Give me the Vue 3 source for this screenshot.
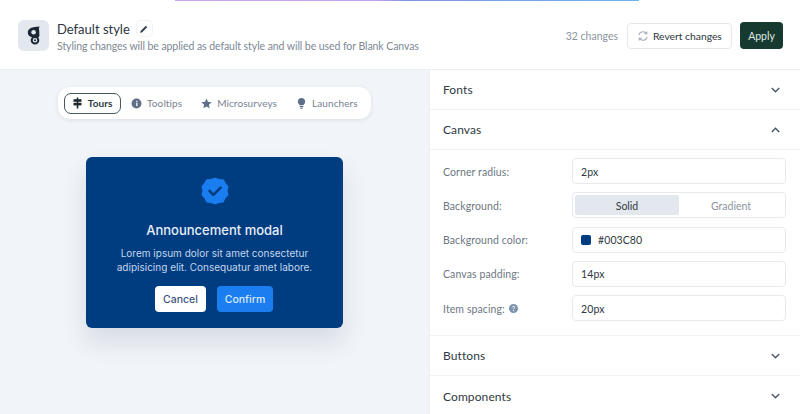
<template>
  <div class="page">
    <div class="top-line"></div>

    <header class="header">
      <div class="logo">
        <svg width="14" height="19" viewBox="0 0 14 19">
          <path d="M.8 6.4 C.8 2.8 5 .8 12.6 .6 C12 2 11.6 2.8 12.2 4.4 L12.4 9 C12.6 11.6 10.6 12 9.6 11.4 C7 12 3.6 11.4 2 9.8 C1.2 8.8 .8 7.6 .8 6.4Z" fill="#1c2733" />
          <circle cx="6.6" cy="6.2" r="2.3" fill="#e3e8ef" />
          <circle cx="8" cy="14.2" r="3.3" fill="#e3e8ef" stroke="#1c2733" stroke-width="2" />
          <circle cx="8" cy="14.2" r="1" fill="#1c2733" />
        </svg>
      </div>
      <div class="heading">
        <div class="title-row">
          <span class="title">Default style</span>
          <span class="edit">
            <svg width="10" height="10" viewBox="0 0 10 10">
              <path d="M1.2 8.8 L1.6 7 L6.8 1.8 L8.2 3.2 L3 8.4Z" fill="#38424e" />
            </svg>
          </span>
        </div>
        <div class="subtitle">Styling changes will be applied as default style and will be used for Blank Canvas</div>
      </div>
      <div class="actions">
        <span class="count">32 changes</span>
        <button class="revert">
          <svg width="12" height="12" viewBox="0 0 12 12" fill="none" stroke="#a3abb5" stroke-width="1.1">
            <path d="M2 5 C2.4 3 4 1.8 6 1.8 C7.6 1.8 8.8 2.5 9.6 3.6" />
            <path d="M10 6.8 C9.6 8.8 8 10.2 6 10.2 C4.4 10.2 3.2 9.5 2.4 8.4" />
            <path d="M9.8 1.4 V3.8 H7.4" />
            <path d="M2.2 10.6 V8.2 H4.6" />
          </svg>
          Revert changes
        </button>
        <button class="apply">Apply</button>
      </div>
    </header>

    <div class="main">
      <section class="preview">
        <nav class="tabs">
          <div class="tab active">
            <svg width="11" height="12" viewBox="0 0 11 12" fill="#1f2a30">
              <rect x="4.7" y="0.5" width="1.6" height="11" />
              <rect x="1.5" y="2.2" width="8" height="2.6" />
              <rect x="1.5" y="5.8" width="8" height="2.6" />
            </svg>
            Tours
          </div>
          <div class="tab">
            <svg width="11" height="11" viewBox="0 0 12 12">
              <circle cx="6" cy="6" r="5.4" fill="#5f6f88" />
              <rect x="5.6" y="5.2" width="1.5" height="3.6" fill="#f1f4f8" />
              <rect x="5.6" y="3.1" width="1.5" height="1.4" fill="#f1f4f8" />
            </svg>
            Tooltips
          </div>
          <div class="tab">
            <svg width="11" height="11" viewBox="0 0 12 12">
              <path d="M6 .6 L7.6 4.2 L11.6 4.7 L8.6 7.3 L9.5 11.3 L6 9.2 L2.5 11.3 L3.4 7.3 L.4 4.7 L4.4 4.2Z" fill="#5f6f88" />
            </svg>
            Microsurveys
          </div>
          <div class="tab">
            <svg width="11" height="13" viewBox="0 0 12 13" fill="#5f6f88">
              <path d="M6 .5 C8.5 .5 10 2.3 10 4.4 C10 6 9 7 8.2 8.2 H3.8 C3 7 2 6 2 4.4 C2 2.3 3.5 .5 6 .5Z" />
              <rect x="4" y="8.9" width="4" height="1.4" />
              <rect x="4.7" y="10.9" width="2.6" height="1.3" />
            </svg>
            Launchers
          </div>
        </nav>

        <div class="modal">
          <svg class="badge" width="28" height="28" viewBox="0 0 28 28">
            <path
              d="M14 1.5 L18 2.8 L22 3 L24 6.4 L26.6 9.4 L25.8 13.6 L26.6 18 L23.8 21 L22 24.6 L18 25.2 L14 26.6 L10 25.2 L6 24.6 L4.2 21 L1.4 18 L2.2 13.6 L1.4 9.4 L4 6.4 L6 3 L10 2.8Z"
              fill="#1a7df0"
              stroke="#1a7df0"
              stroke-width="1.6"
              stroke-linejoin="round"
            />
            <path d="M8.6 14 L12.4 17.8 L19.6 10.6" fill="none" stroke="#003c80" stroke-width="2.6" stroke-linecap="round" stroke-linejoin="round" />
          </svg>
          <h2>Announcement modal</h2>
          <p>Lorem ipsum dolor sit amet consectetur adipisicing elit. Consequatur amet labore.</p>
          <div class="modal-buttons">
            <button class="cancel">Cancel</button>
            <button class="confirm">Confirm</button>
          </div>
        </div>
      </section>

      <aside class="panel">
        <div class="section-head">
          <span>Fonts</span>
          <svg width="9" height="6" viewBox="0 0 9 6" fill="none" stroke="#4a5560" stroke-width="1.4"><path d="M.8 1 L4.5 4.7 L8.2 1" /></svg>
        </div>
        <div class="section-head">
          <span>Canvas</span>
          <svg width="9" height="6" viewBox="0 0 9 6" fill="none" stroke="#4a5560" stroke-width="1.4"><path d="M.8 5 L4.5 1.3 L8.2 5" /></svg>
        </div>
        <div class="section-body">
          <label>Corner radius:</label>
          <div class="field">2px</div>

          <label>Background:</label>
          <div class="segmented">
            <span class="seg on">Solid</span>
            <span class="seg">Gradient</span>
          </div>

          <label>Background color:</label>
          <div class="field"><i class="swatch"></i>#003C80</div>

          <label>Canvas padding:</label>
          <div class="field">14px</div>

          <label>
            Item spacing:
            <svg class="help" width="9" height="9" viewBox="0 0 10 10">
              <circle cx="5" cy="5" r="5" fill="#7d93ad" />
              <path d="M3.6 3.9 C3.7 2.2 6.4 2.2 6.4 3.8 C6.4 4.9 5 4.8 5 6" fill="none" stroke="#fff" stroke-width="1" />
              <circle cx="5" cy="7.4" r=".65" fill="#fff" />
            </svg>
          </label>
          <div class="field">20px</div>
        </div>
        <div class="section-head">
          <span>Buttons</span>
          <svg width="9" height="6" viewBox="0 0 9 6" fill="none" stroke="#4a5560" stroke-width="1.4"><path d="M.8 1 L4.5 4.7 L8.2 1" /></svg>
        </div>
        <div class="section-head last">
          <span>Components</span>
          <svg width="9" height="6" viewBox="0 0 9 6" fill="none" stroke="#4a5560" stroke-width="1.4"><path d="M.8 1 L4.5 4.7 L8.2 1" /></svg>
        </div>
      </aside>
    </div>
  </div>
</template>

<script setup>
</script>

<style>
html,
body {
  margin: 0;
  background: #fff;
}
</style>

<style scoped>
.page {
  position: relative;
  width: 800px;
  height: 414px;
  overflow: hidden;
  background: #fff;
  font-family: Lato, "Open Sans", sans-serif;
  color: #2a333d;
}

.top-line {
  position: absolute;
  top: 0;
  left: 175px;
  width: 464px;
  height: 1px;
  background: linear-gradient(90deg, #c9a8f0 0%, #c4a4ee 43%, #7f94e6 50%, #6fb4f2 100%);
}

.header {
  display: flex;
  align-items: center;
  height: 67px;
  padding: 2px 17px 0 18px;
  border-bottom: 1px solid #edf0f3;
}

.logo {
  display: flex;
  align-items: center;
  justify-content: center;
  width: 31px;
  height: 31px;
  margin-right: 8px;
  border-radius: 6px;
  background: #e3e8ef;
}

.heading {
  flex: 1;
}

.title-row {
  display: flex;
  align-items: center;
  gap: 6px;
  height: 18px;
}

.title {
  font-size: 13px;
  color: #2b343e;
}

.edit {
  display: flex;
  align-items: center;
  justify-content: center;
  width: 17px;
  height: 17px;
  border: 1px solid #f0f2f5;
  border-radius: 5px;
  box-sizing: border-box;
}

.subtitle {
  margin-top: 2px;
  font-size: 10.5px;
  letter-spacing: -0.07px;
  color: #7d8894;
}

.actions {
  display: flex;
  align-items: center;
}

.count {
  margin-right: 9px;
  font-size: 10.5px;
  color: #8a949e;
}

button {
  font-family: inherit;
  cursor: pointer;
}

.revert {
  display: flex;
  align-items: center;
  gap: 4px;
  width: 105px;
  height: 26px;
  padding: 0 0 0 9px;
  margin-right: 8px;
  border: 1px solid #e4e8ec;
  border-radius: 4px;
  background: #fff;
  font-size: 10.3px;
  color: #2a333d;
  box-sizing: border-box;
}

.apply {
  width: 43px;
  height: 27px;
  padding: 0;
  border: 0;
  border-radius: 4px;
  background: #173a30;
  font-size: 10.5px;
  color: #dfe9e4;
}

.main {
  display: flex;
  height: 345px;
}

.preview {
  display: flex;
  flex-direction: column;
  align-items: center;
  width: 429px;
  padding-top: 17px;
  background: #f1f4f8;
  box-sizing: border-box;
}

.tabs {
  display: flex;
  align-items: center;
  gap: 2px;
  height: 32px;
  padding: 0 5px 0 6px;
  border-radius: 12px;
  background: #fff;
  box-shadow: 0 1px 4px rgba(60, 80, 110, 0.12);
  box-sizing: border-box;
}

.tab {
  display: flex;
  align-items: center;
  gap: 5px;
  height: 21px;
  padding: 0 8.5px;
  font-size: 10px;
  letter-spacing: 0.1px;
  color: #76828f;
  box-sizing: border-box;
}

.tab.active {
  padding: 0 7px;
  border: 1px solid #45585a;
  border-radius: 7px;
  font-weight: 700;
  color: #2a3a3e;
}

.modal {
  display: flex;
  flex-direction: column;
  align-items: center;
  width: 257px;
  height: 171px;
  margin-top: 38px;
  padding-top: 20px;
  border-radius: 6px;
  background: #003c80;
  box-shadow: 0 14px 24px rgba(60, 80, 110, 0.14);
  font-family: Inter, sans-serif;
  box-sizing: border-box;
}

.badge {
  flex: none;
}

.modal h2 {
  margin: 16px 0 0;
  font-size: 13px;
  line-height: 18px;
  font-weight: 500;
  color: #e6eefa;
}

.modal p {
  width: 215px;
  margin: 7px 0 0;
  font-size: 10px;
  line-height: 14px;
  text-align: center;
  color: #c4d6ee;
}

.modal-buttons {
  display: flex;
  gap: 11px;
  margin: 12px 1px 0 0;
}

.modal-buttons button {
  height: 26px;
  padding: 0;
  border: 0;
  border-radius: 4px;
  font-family: Inter, sans-serif;
  font-size: 10.5px;
  font-weight: 500;
}

.cancel {
  width: 51px;
  background: #fff;
  color: #3a5680;
}

.confirm {
  width: 56px;
  background: #1a7df0;
  color: #dbe9fb;
}

.panel {
  flex: 1;
  border-left: 1px solid #edf0f3;
}

.section-head {
  display: flex;
  align-items: center;
  justify-content: space-between;
  height: 40px;
  padding: 0 20px 0 13px;
  border-bottom: 1px solid #f0f2f5;
  font-size: 12px;
  letter-spacing: 0.1px;
  color: #2f3842;
  box-sizing: border-box;
}

.section-head.last {
  border-bottom: 0;
}

.section-body {
  display: grid;
  grid-template-columns: 129px 214px;
  grid-auto-rows: 26px;
  row-gap: 8.3px;
  align-items: center;
  height: 186px;
  padding: 8px 0 0 13px;
  border-bottom: 1px solid #f0f2f5;
  box-sizing: border-box;
}

label {
  display: flex;
  align-items: center;
  gap: 4px;
  padding-top: 1px;
  font-size: 10.5px;
  letter-spacing: 0.1px;
  color: #6d7782;
}

.field {
  display: flex;
  align-items: center;
  height: 26px;
  padding: 1px 8px 0;
  border: 1px solid #e6e9ed;
  border-radius: 4px;
  font-size: 10.5px;
  letter-spacing: 0.1px;
  color: #2f3842;
  box-sizing: border-box;
}

.swatch {
  width: 10px;
  height: 10px;
  margin-right: 7px;
  border-radius: 2px;
  background: #003c80;
}

.segmented {
  display: flex;
  height: 26px;
  padding: 2px;
  border: 1px solid #e6e9ed;
  border-radius: 4px;
  box-sizing: border-box;
}

.seg {
  flex: 1;
  display: flex;
  align-items: center;
  justify-content: center;
  padding-top: 1px;
  border-radius: 2px;
  font-size: 10.5px;
  color: #8a949e;
}

.seg.on {
  background: #e3e8ef;
  color: #2f3842;
}
</style>
